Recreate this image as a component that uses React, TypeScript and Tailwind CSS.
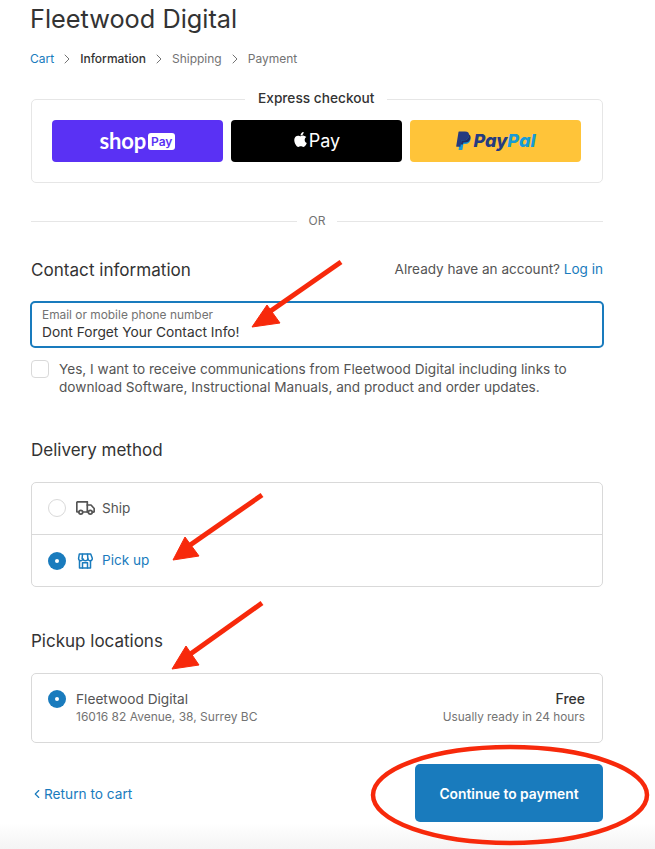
import React from "react";
import { ChevronRight, ChevronLeft } from "lucide-react";
import { FaApple } from "react-icons/fa";

function PayPalMark() {
  return (
    <svg width="15" height="20" viewBox="0 0 15 20">
      <path d="M4.6 4.6h6.2c2.8 0 4.2 1.6 3.8 4-.5 3-2.6 4.4-5.3 4.4H7.4l-.9 5.6c0 .2-.2.4-.5.4H2.6z" fill="#179bd7" />
      <path d="M3 .5h6c3 0 4.5 1.600 4 4.200-.5 3.100-2.700 4.700-5.600 4.700H5.500l-1 6c0 .2-.2.400-.5.400H.6c-.3 0-.5-.2-.4-.5L2.500 1c0-.3.200-.5.500-.5z" fill="#253b80" />
      <path d="M4.900 13.400l.6-4h1.900c2.900 0 5.100-1.600 5.600-4.700.1-.4.1-.8.100-1.100 1 .6 1.700 1.700 1.400 3.400-.4 3-2.600 4.600-5.400 4.600H7.400l-.4 1.800z" fill="#222d65" />
    </svg>
  );
}

function TruckIcon() {
  return (
    <svg className="mb-[1px] ml-[10px] h-[14px] w-[19px] text-[#545454]" viewBox="0 0 19 14" fill="none" stroke="currentColor" strokeWidth="1.700" strokeLinejoin="round" strokeLinecap="round">
      <path d="M2.500 11H1.700a.9.900 0 0 1-.9-.9V1.700a.9.900 0 0 1 .9-.9h9.600V11H7" />
      <path d="M11.300 4h3.700l3.200 3.500v2.700a.9.900 0 0 1-.9.900H16.500" />
      <path d="M11.300 11H12" />
      <circle cx="4.800" cy="11.200" r="1.900" />
      <circle cx="14.300" cy="11.200" r="1.900" />
    </svg>
  );
}

function StoreIcon() {
  return (
    <svg className="ml-[11px] h-[16px] w-[16px]" viewBox="0 0 16 16" fill="none" stroke="currentColor" strokeWidth="1.500" strokeLinejoin="round" strokeLinecap="round">
      <path d="M2.300 1h11.400l1.600 4.300a2.200 2.200 0 0 1-4.400.5 2.500 2.500 0 0 1-4.900 0 2.200 2.200 0 0 1-4.400-.5z" />
      <path d="M5.500 1.200 5.100 5.800M10.500 1.200l.4 4.600" />
      <path d="M2.500 8.200V15h11V8.200" />
      <path d="M5.500 15V9.800h5V15" />
    </svg>
  );
}

function Radio({ on }: { on: boolean }) {
  return on ? (
    <span className="flex h-[18px] w-[18px] shrink-0 items-center justify-center rounded-full bg-[#197bbd]">
      <span className="h-1 w-1 rounded-full bg-white" />
    </span>
  ) : (
    <span className="mb-[1px] h-[18px] w-[18px] shrink-0 rounded-full border border-[#d9d9d9] bg-white" />
  );
}

function Sep() {
  return <ChevronRight className="mx-[5px] h-[16px] w-[16px] text-[#737373]" strokeWidth={1.5} />;
}

export default function App() {
  return (
    <div className="relative h-[849px] w-[655px] overflow-hidden bg-white font-['Inter','Liberation_Sans',sans-serif] text-[#545454]">
      <div className="pl-[31px] pr-[52px]">
        <h1 className="ml-[-1px] h-[38px] text-[25.300px] font-normal leading-[38px] text-[#333333]">Fleetwood Digital</h1>

        <nav className="ml-[-1px] mt-[12px] flex h-[18px] items-center text-[12px] leading-[18px] text-[#737373]">
          <span className="text-[#197bbd]">Cart</span>
          <Sep />
          <span className="font-medium text-[#333333]">Information</span>
          <Sep />
          <span>Shipping</span>
          <Sep />
          <span>Payment</span>
        </nav>

        <section className="relative mt-[31px] h-[84px] rounded-[5px] border border-[#e6e6e6] pl-[20px] pr-[21px] pt-[20px]">
          <span className="absolute left-[213px] top-[-11px] bg-white px-[13px] text-[13.700px] font-medium leading-[18px] text-[#333333]">
            Express checkout
          </span>
          <div className="grid grid-cols-3 gap-[8px]">
            <div className="flex h-[42px] items-center justify-center gap-[2px] rounded-[4px] bg-[#5a31f4] text-white">
              <span className="font-['Lato',sans-serif] text-[22px] font-bold leading-none tracking-[-0.2px]">shop</span>
              <span className="rounded-[3px] bg-white px-[3px] py-[1px] text-[12px] font-semibold leading-[15px] text-[#5a31f4]">Pay</span>
            </div>
            <div className="flex h-[42px] items-center justify-center gap-[1px] rounded-[4px] bg-black text-white">
              <FaApple className="mb-[3px] h-[17px] w-[15px]" />
              <span className="text-[18px] font-normal leading-none">Pay</span>
            </div>
            <div className="flex h-[42px] items-center justify-center gap-[3px] rounded-[4px] bg-[#ffc439]">
              <PayPalMark />
              <span className="text-[18px] font-extrabold italic leading-none">
                <span className="text-[#253b80]">Pay</span>
                <span className="text-[#179bd7]">Pal</span>
              </span>
            </div>
          </div>
        </section>

        <div className="mt-[29px] flex h-[18px] items-center gap-[12px] text-[12px] text-[#737373]">
          <span className="h-px flex-1 bg-[#e6e6e6]" />
          <span>OR</span>
          <span className="h-px flex-1 bg-[#e6e6e6]" />
        </div>

        <div className="mt-[27px] flex h-[24px] items-center justify-between">
          <h2 className="pt-[1px] text-[17.100px] font-normal text-[#333333]">Contact information</h2>
          <p className="text-[13.550px] text-[#545454]">
            Already have an account? <span className="text-[#197bbd]">Log in</span>
          </p>
        </div>

        <div className="mx-[-1px] mt-[20px] h-[47px] rounded-[5px] border-2 border-[#197bbd] px-[10px] pt-[4px]">
          <div className="text-[11.900px] leading-[16px] text-[#737373]">Email or mobile phone number</div>
          <div className="text-[13.750px] leading-[18px] text-[#333333]">Dont Forget Your Contact Info!</div>
        </div>

        <div className="mt-[12px] flex gap-[10px]">
          <span className="h-[18px] w-[18px] shrink-0 rounded-[4px] border border-[#d9d9d9] bg-white" />
          <p className="text-[13.620px] leading-[18px] text-[#545454]">
            Yes, I want to receive communications from Fleetwood Digital including links to download Software, Instructional Manuals, and product and order updates.
          </p>
        </div>

        <h2 className="mt-[42px] h-[24px] text-[17px] font-normal leading-[24px] text-[#333333]">Delivery method</h2>

        <div className="mt-[20px] h-[105px] rounded-[5px] border border-[#d9d9d9] text-[13.600px]">
          <div className="flex h-[52px] items-center border-b border-[#d9d9d9] pl-[16px]">
            <Radio on={false} />
            <TruckIcon />
            <span className="mb-[1px] ml-[7px]">Ship</span>
          </div>
          <div className="flex h-[51px] items-center pl-[16px] text-[#197bbd]">
            <Radio on />
            <StoreIcon />
            <span className="ml-[9px]">Pick up</span>
          </div>
        </div>

        <h2 className="mt-[42px] h-[24px] text-[17px] font-normal leading-[24px] text-[#333333]">Pickup locations</h2>

        <div className="mt-[20px] flex h-[70px] justify-between rounded-[5px] border border-[#d9d9d9] pl-[16px] pr-[17px] pt-[16px]">
          <div className="flex gap-[10px]">
            <Radio on />
            <div>
              <div className="text-[13.700px] leading-[18px] text-[#545454]">Fleetwood Digital</div>
              <div className="text-[12px] leading-[18px] text-[#737373]">16016 82 Avenue, 38, Surrey BC</div>
            </div>
          </div>
          <div className="text-right">
            <div className="text-[14px] font-medium leading-[18px] text-[#333333]">Free</div>
            <div className="text-[11.800px] leading-[18px] text-[#737373]">Usually ready in 24 hours</div>
          </div>
        </div>

        <div className="mt-[21px] flex items-center justify-between">
          <span className="flex items-center pt-[2px] text-[13.700px] text-[#197bbd]">
            <ChevronLeft className="ml-[-1px] h-[16px] w-[14px]" strokeWidth={2} />
            Return to cart
          </span>
          <div className="flex h-[58px] w-[188px] items-center justify-center rounded-[5px] bg-[#197bbd] pt-[2px] text-[13.800px] font-semibold text-white">
            Continue to payment
          </div>
        </div>
      </div>

      <div className="absolute bottom-0 left-0 h-[26px] w-full bg-gradient-to-b from-white to-[#f4f4f4]" />

      <svg className="pointer-events-none absolute left-0 top-0" width="655" height="849" viewBox="0 0 655 849">
        <g fill="#f7290b" stroke="#f7290b" strokeLinejoin="round">
          <path d="M341 262 L262 317" strokeWidth="5" fill="none" />
          <path d="M252 327 L267 305 L280 323 Z" strokeWidth="1" />
          <path d="M262 495 L183 550" strokeWidth="5" fill="none" />
          <path d="M173 560 L185 537 L199 556 Z" strokeWidth="1" />
          <path d="M262 603 L182 660" strokeWidth="5" fill="none" />
          <path d="M172 669 L186 646 L199 665 Z" strokeWidth="1" />
        </g>
        <ellipse cx="510" cy="795" rx="137" ry="48" fill="none" stroke="#f7290b" strokeWidth="4.500" />
      </svg>
    </div>
  );
}
